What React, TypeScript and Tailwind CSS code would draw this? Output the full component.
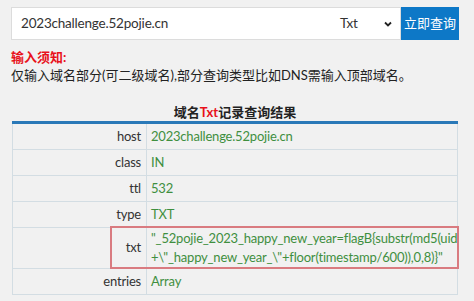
const rows: { label: string; value: string }[] = [
  { label: "host", value: "2023challenge.52pojie.cn" },
  { label: "class", value: "IN" },
  { label: "ttl", value: "532" },
  { label: "type", value: "TXT" },
];

function Row({ label, children, tall }: { label: string; children: React.ReactNode; tall?: boolean }) {
  return (
    <div className={`flex border-b border-[#d3dde3] ${tall ? "h-[41px]" : "h-[26px]"}`}>
      <div className="flex w-[134px] shrink-0 items-center justify-end border-r border-[#d3dde3] pr-[5px] text-[#333]">
        {label}
      </div>
      <div className="flex min-w-0 items-center whitespace-nowrap pl-[4px] leading-[19px] text-[#3f8f3f]">{children}</div>
    </div>
  );
}

export default function App() {
  return (
    <div
      className="h-[301px] w-[474px] bg-[#f1f1f1] px-[11px] pt-[7px] text-[13px] tracking-[-0.2px]"
      style={{ fontFamily: 'Lato, "Noto Sans CJK SC", sans-serif' }}
    >
      <div className="flex h-[33px] w-[448px]">
        <div className="flex flex-1 items-center border border-[#dcdcdc] bg-white pl-[9px] text-[13.5px]">
          <span className="flex-1 text-[#333]">2023challenge.52pojie.cn</span>
          <span className="w-[43px] text-[#333]">Txt</span>
          <svg width="10" height="10" viewBox="0 0 10 10" className="mr-[7px]">
            <path d="M2 3.5 L5 6.5 L8 3.5" stroke="#222" strokeWidth="1.8" fill="none" />
          </svg>
        </div>
        <button className="w-[58px] bg-[#0d78c7] text-[13px] tracking-normal text-white">立即查询</button>
      </div>

      <div className="mt-[8px] text-[13px] font-bold leading-[18px] tracking-normal text-[#e8111b]">输入须知:</div>
      <div className="text-[13px] leading-[18px] tracking-normal text-[#222]">
        仅输入域名部分(可二级域名),部分查询类型比如DNS需输入顶部域名。
      </div>

      <div className="mt-[20px] w-[447px] pl-[1px]">
        <div className="pb-[1px] text-center text-[13px] font-bold leading-[16px] tracking-normal text-[#222]">
          域名<span className="text-[#e8111b]">Txt</span>记录查询结果
        </div>
        <div className="border-t-[3px] border-[#2a79b8] text-[13px]">
          <div className="border-x border-[#d3dde3]">
            {rows.map((r) => (
              <Row key={r.label} label={r.label}>
                {r.value}
              </Row>
            ))}
            <div className="relative">
              <Row label="txt" tall>
                <div>
                  <div>"_52pojie_2023_happy_new_year=flagB{"{"}substr(md5(uid</div>
                  <div>+\"_happy_new_year_\"+floor(timestamp/600)),0,8){"}"}"</div>
                </div>
              </Row>
              <div className="pointer-events-none absolute left-[97px] right-[-2px] top-[-2px] bottom-[0px] border-2 border-[#d97b80]" />
            </div>
            <Row label="entries">Array</Row>
          </div>
        </div>
      </div>
    </div>
  );
}
